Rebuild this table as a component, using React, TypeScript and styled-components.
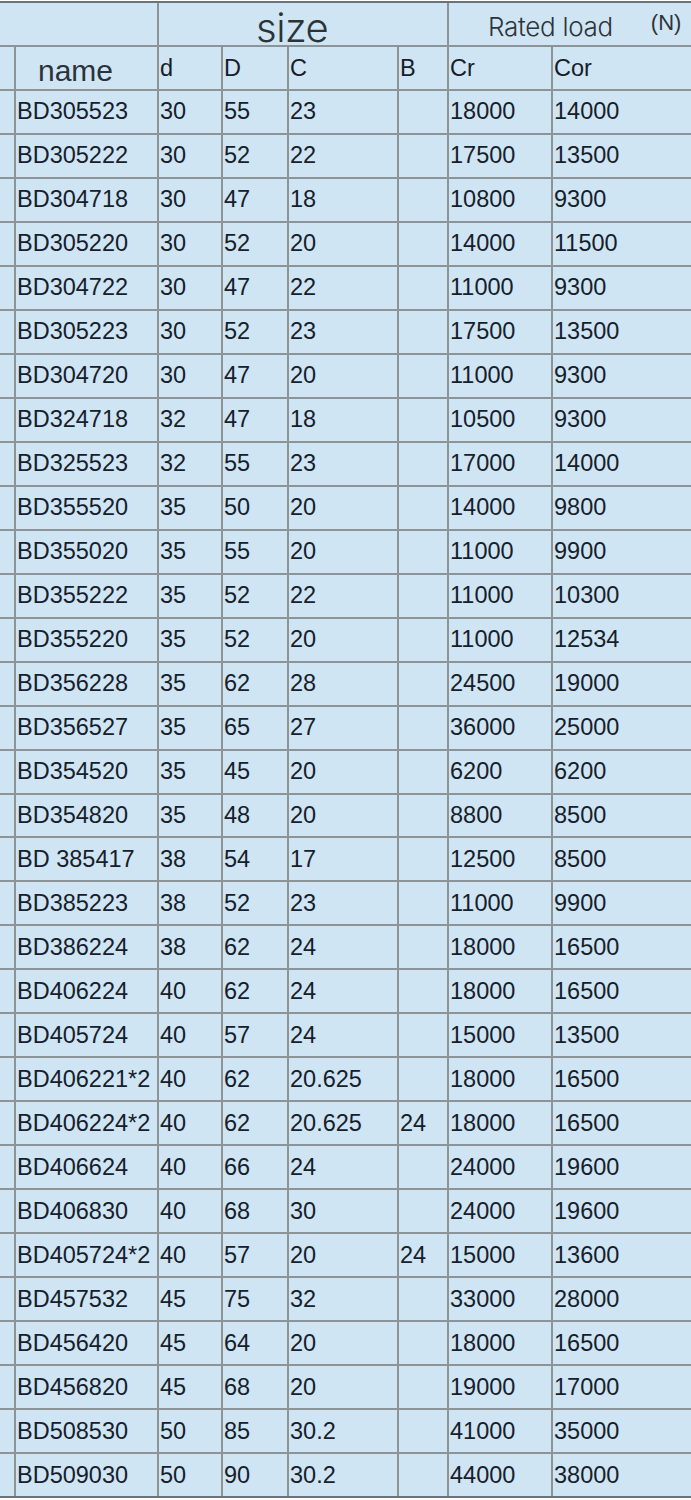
import React from 'react';
import styled, { createGlobalStyle } from 'styled-components';

const GlobalStyle = createGlobalStyle`
  html, body {
    margin: 0;
    padding: 0;
    background: #ffffff;
  }
`;

interface Bearing {
  name: string;
  d: string;
  D: string;
  C: string;
  B?: string;
  Cr: string;
  Cor: string;
}

const rows: Bearing[] = [
  { name: 'BD305523', d: '30', D: '55', C: '23', Cr: '18000', Cor: '14000' },
  { name: 'BD305222', d: '30', D: '52', C: '22', Cr: '17500', Cor: '13500' },
  { name: 'BD304718', d: '30', D: '47', C: '18', Cr: '10800', Cor: '9300' },
  { name: 'BD305220', d: '30', D: '52', C: '20', Cr: '14000', Cor: '11500' },
  { name: 'BD304722', d: '30', D: '47', C: '22', Cr: '11000', Cor: '9300' },
  { name: 'BD305223', d: '30', D: '52', C: '23', Cr: '17500', Cor: '13500' },
  { name: 'BD304720', d: '30', D: '47', C: '20', Cr: '11000', Cor: '9300' },
  { name: 'BD324718', d: '32', D: '47', C: '18', Cr: '10500', Cor: '9300' },
  { name: 'BD325523', d: '32', D: '55', C: '23', Cr: '17000', Cor: '14000' },
  { name: 'BD355520', d: '35', D: '50', C: '20', Cr: '14000', Cor: '9800' },
  { name: 'BD355020', d: '35', D: '55', C: '20', Cr: '11000', Cor: '9900' },
  { name: 'BD355222', d: '35', D: '52', C: '22', Cr: '11000', Cor: '10300' },
  { name: 'BD355220', d: '35', D: '52', C: '20', Cr: '11000', Cor: '12534' },
  { name: 'BD356228', d: '35', D: '62', C: '28', Cr: '24500', Cor: '19000' },
  { name: 'BD356527', d: '35', D: '65', C: '27', Cr: '36000', Cor: '25000' },
  { name: 'BD354520', d: '35', D: '45', C: '20', Cr: '6200', Cor: '6200' },
  { name: 'BD354820', d: '35', D: '48', C: '20', Cr: '8800', Cor: '8500' },
  { name: 'BD 385417', d: '38', D: '54', C: '17', Cr: '12500', Cor: '8500' },
  { name: 'BD385223', d: '38', D: '52', C: '23', Cr: '11000', Cor: '9900' },
  { name: 'BD386224', d: '38', D: '62', C: '24', Cr: '18000', Cor: '16500' },
  { name: 'BD406224', d: '40', D: '62', C: '24', Cr: '18000', Cor: '16500' },
  { name: 'BD405724', d: '40', D: '57', C: '24', Cr: '15000', Cor: '13500' },
  { name: 'BD406221*2', d: '40', D: '62', C: '20.625', Cr: '18000', Cor: '16500' },
  { name: 'BD406224*2', d: '40', D: '62', C: '20.625', B: '24', Cr: '18000', Cor: '16500' },
  { name: 'BD406624', d: '40', D: '66', C: '24', Cr: '24000', Cor: '19600' },
  { name: 'BD406830', d: '40', D: '68', C: '30', Cr: '24000', Cor: '19600' },
  { name: 'BD405724*2', d: '40', D: '57', C: '20', B: '24', Cr: '15000', Cor: '13600' },
  { name: 'BD457532', d: '45', D: '75', C: '32', Cr: '33000', Cor: '28000' },
  { name: 'BD456420', d: '45', D: '64', C: '20', Cr: '18000', Cor: '16500' },
  { name: 'BD456820', d: '45', D: '68', C: '20', Cr: '19000', Cor: '17000' },
  { name: 'BD508530', d: '50', D: '85', C: '30.2', Cr: '41000', Cor: '35000' },
  { name: 'BD509030', d: '50', D: '90', C: '30.2', Cr: '44000', Cor: '38000' },
];

const Sheet = styled.div`
  margin-top: 1px;
  width: 691px;
  border-top: 2px solid #6c7378;
  border-bottom: 2px solid #6c7378;
  background: #8d9498;
  display: grid;
  grid-template-columns: 14px 141px 62px 64px 108px 48px 102px 138px;
  grid-template-rows: 42px 42px repeat(32, 41.97px);
  gap: 2px;
`;

const Cell = styled.div<{ $span?: number }>`
  grid-column: span ${p => p.$span ?? 1};
  background: #cfe5f4;
  display: flex;
  align-items: center;
  padding-left: 1px;
  font-family: 'Liberation Sans', Arial, sans-serif;
  font-size: 23.5px;
  color: #16202a;
  white-space: nowrap;
  overflow: hidden;
`;

const NameHead = styled(Cell)`
  align-items: flex-end;
  padding-left: 22px;
  padding-bottom: 1px;
  font-size: 30px;
  color: #2a333a;
`;

const GroupHead = styled(Cell)`
  align-items: flex-end;
  overflow: visible;
  font-family: Inter, 'Liberation Sans', sans-serif;
  font-weight: 300;
  color: #2d3438;
`;

const SizeTitle = styled.span`
  font-size: 40px;
  line-height: 1;
  margin-left: 96px;
  margin-bottom: -3px;
  letter-spacing: -0.5px;
`;

const LoadTitle = styled.span`
  font-size: 26px;
  line-height: 1;
  margin-left: 38px;
  margin-bottom: 5px;
  letter-spacing: -0.3px;
`;

const Unit = styled.span`
  font-family: 'Liberation Sans', Arial, sans-serif;
  font-weight: 400;
  font-size: 22px;
  line-height: 1;
  margin-left: 38px;
  margin-bottom: 11px;
`;

export default function App() {
  return (
    <>
      <GlobalStyle />
      <Sheet>
        <Cell $span={2} />
        <GroupHead $span={4}>
          <SizeTitle>size</SizeTitle>
        </GroupHead>
        <GroupHead $span={2}>
          <LoadTitle>Rated load</LoadTitle>
          <Unit>(N)</Unit>
        </GroupHead>

        <Cell />
        <NameHead>name</NameHead>
        <Cell>d</Cell>
        <Cell>D</Cell>
        <Cell>C</Cell>
        <Cell>B</Cell>
        <Cell>Cr</Cell>
        <Cell>Cor</Cell>

        {rows.map(r => (
          <React.Fragment key={r.name}>
            <Cell />
            <Cell>{r.name}</Cell>
            <Cell>{r.d}</Cell>
            <Cell>{r.D}</Cell>
            <Cell>{r.C}</Cell>
            <Cell>{r.B ?? ''}</Cell>
            <Cell>{r.Cr}</Cell>
            <Cell>{r.Cor}</Cell>
          </React.Fragment>
        ))}
      </Sheet>
    </>
  );
}
